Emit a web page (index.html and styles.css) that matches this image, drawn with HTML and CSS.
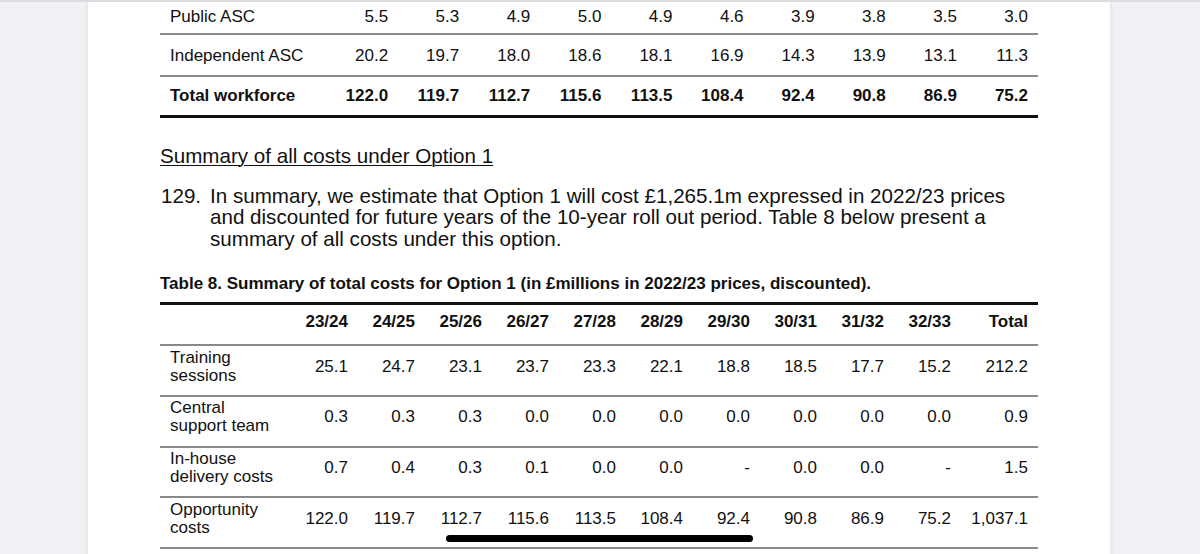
FILE: index.html
```html
<!DOCTYPE html>
<html lang="en">
<head>
<meta charset="utf-8">
<title>Summary of all costs under Option 1</title>
<link rel="stylesheet" href="styles.css">
</head>
<body>
<div class="page">
  <table class="tbl tbl-workforce">
    <colgroup>
      <col class="c-label1">
      <col span="10" class="c-num1">
    </colgroup>
    <tbody>
      <tr class="first">
        <td class="lbl">Public ASC</td>
        <td>5.5</td><td>5.3</td><td>4.9</td><td>5.0</td><td>4.9</td><td>4.6</td><td>3.9</td><td>3.8</td><td>3.5</td><td>3.0</td>
      </tr>
      <tr>
        <td class="lbl">Independent ASC</td>
        <td>20.2</td><td>19.7</td><td>18.0</td><td>18.6</td><td>18.1</td><td>16.9</td><td>14.3</td><td>13.9</td><td>13.1</td><td>11.3</td>
      </tr>
      <tr class="total">
        <td class="lbl">Total workforce</td>
        <td>122.0</td><td>119.7</td><td>112.7</td><td>115.6</td><td>113.5</td><td>108.4</td><td>92.4</td><td>90.8</td><td>86.9</td><td>75.2</td>
      </tr>
    </tbody>
  </table>

  <h2 class="subhead">Summary of all costs under Option 1</h2>

  <div class="para">
    <span class="para-num">129.</span>
    <p class="para-text">In summary, we estimate that Option 1 will cost £1,265.1m expressed in 2022/23 prices and discounted for future years of the 10-year roll out period. Table 8 below present a summary of all costs under this option.</p>
  </div>

  <p class="caption">Table 8. Summary of total costs for Option 1 (in £millions in 2022/23 prices, discounted).</p>

  <table class="tbl tbl-costs">
    <colgroup>
      <col class="c-label2">
      <col span="10" class="c-num2">
      <col class="c-total">
    </colgroup>
    <thead>
      <tr>
        <th></th>
        <th>23/24</th><th>24/25</th><th>25/26</th><th>26/27</th><th>27/28</th><th>28/29</th><th>29/30</th><th>30/31</th><th>31/32</th><th>32/33</th><th>Total</th>
      </tr>
    </thead>
    <tbody>
      <tr>
        <td class="lbl">Training<br>sessions</td>
        <td>25.1</td><td>24.7</td><td>23.1</td><td>23.7</td><td>23.3</td><td>22.1</td><td>18.8</td><td>18.5</td><td>17.7</td><td>15.2</td><td>212.2</td>
      </tr>
      <tr>
        <td class="lbl">Central<br>support team</td>
        <td>0.3</td><td>0.3</td><td>0.3</td><td>0.0</td><td>0.0</td><td>0.0</td><td>0.0</td><td>0.0</td><td>0.0</td><td>0.0</td><td>0.9</td>
      </tr>
      <tr>
        <td class="lbl">In-house<br>delivery costs</td>
        <td>0.7</td><td>0.4</td><td>0.3</td><td>0.1</td><td>0.0</td><td>0.0</td><td>-</td><td>0.0</td><td>0.0</td><td>-</td><td>1.5</td>
      </tr>
      <tr>
        <td class="lbl">Opportunity<br>costs</td>
        <td>122.0</td><td>119.7</td><td>112.7</td><td>115.6</td><td>113.5</td><td>108.4</td><td>92.4</td><td>90.8</td><td>86.9</td><td>75.2</td><td>1,037.1</td>
      </tr>
    </tbody>
  </table>
</div>
<div class="home-indicator"></div>
</body>
</html>
```

FILE: styles.css
```css
html, body {
  margin: 0;
  padding: 0;
}

body {
  background: #f1f1f5;
  border-top: 2px solid #dcdce0;
  height: 552px;
  overflow: hidden;
  font-family: "Liberation Sans", Arial, sans-serif;
  color: #111;
}

.page {
  width: 1022px;
  height: 560px;
  margin-left: 88px;
  background: #fff;
  box-shadow: 0 0 5px rgba(0, 0, 0, 0.10);
  padding-left: 72px;
  box-sizing: border-box;
  overflow: hidden;
}

.tbl {
  width: 878px;
  border-collapse: collapse;
  table-layout: fixed;
  font-size: 17px;
  line-height: 18px;
}

.tbl td,
.tbl th {
  padding: 0 10px;
  text-align: right;
  white-space: nowrap;
}

.tbl .lbl {
  text-align: left;
}

/* Workforce table (top) */
.tbl-workforce {
  margin-top: -8px;
}

.c-label1 { width: 167px; }
.c-num1 { width: 71.1px; }

.tbl-workforce td {
  padding-top: 12px;
  padding-bottom: 9.5px;
  border-bottom: 2px solid #8a8a8a;
}

.tbl-workforce .first td {
  padding-top: 13.5px;
  padding-bottom: 7.5px;
}

.tbl-workforce .total td {
  font-weight: bold;
  padding-top: 10px;
  padding-bottom: 10px;
  border-bottom: 3px solid #111;
}

/* Heading and paragraph */
.subhead {
  margin: 27px 0 0;
  font-size: 20.6px;
  line-height: 22px;
  font-weight: normal;
  text-decoration: underline;
  text-underline-offset: 2px;
  text-decoration-thickness: 1px;
}

.para {
  display: flex;
  margin-top: 18px;
  font-size: 20.6px;
  line-height: 21.8px;
}

.para-num {
  width: 49px;
  flex: none;
  padding-left: 1px;
}

.para-text {
  margin: 0;
  width: 820px;
}

.caption {
  margin: 24px 0 0;
  font-size: 17px;
  line-height: 20px;
  font-weight: bold;
}

/* Costs table (bottom) */
.tbl-costs {
  margin-top: 8px;
}

.c-label2 { width: 131px; }
.c-num2 { width: 67px; }
.c-total { width: 77px; }

.tbl-costs thead th {
  font-weight: bold;
  padding-top: 8px;
  padding-bottom: 13.5px;
  border-top: 3px solid #111;
  border-bottom: 2px solid #8a8a8a;
}

.tbl-costs tbody td {
  height: 40.7px;
  padding-top: 0;
  padding-bottom: 8px;
  vertical-align: middle;
  border-bottom: 2px solid #8a8a8a;
}

.home-indicator {
  position: absolute;
  left: 446px;
  top: 535px;
  width: 307px;
  height: 7px;
  border-radius: 4px;
  background: #000;
}
```
